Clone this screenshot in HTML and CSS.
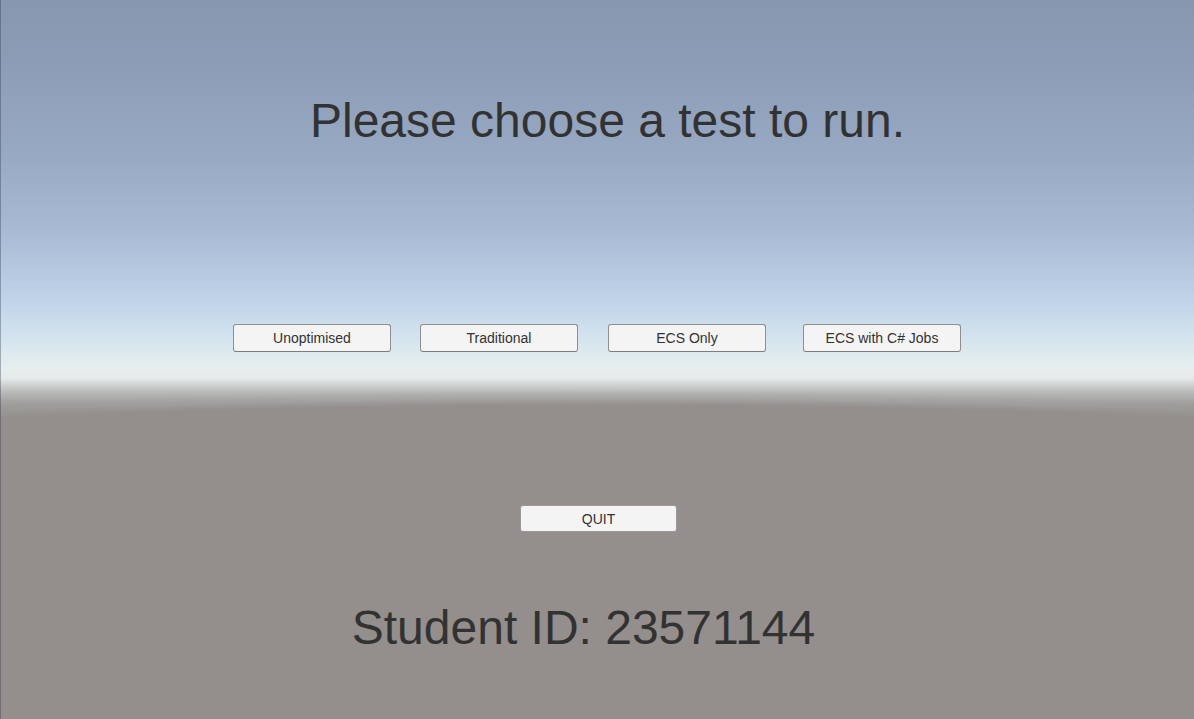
FILE: index.html
```html
<!DOCTYPE html>
<html lang="en">
<head>
<meta charset="utf-8">
<title>Test Menu</title>
<link rel="stylesheet" href="styles.css">
</head>
<body>
<main class="scene">
  <h1 class="title">Please choose a test to run.</h1>
  <div class="test-row">
    <button class="btn">Unoptimised</button>
    <button class="btn btn-traditional">Traditional</button>
    <button class="btn btn-ecs">ECS Only</button>
    <button class="btn btn-jobs">ECS with C# Jobs</button>
  </div>
  <div class="quit-row">
    <button class="btn btn-quit">QUIT</button>
  </div>
  <p class="student">Student ID: 23571144</p>
</main>
</body>
</html>
```
FILE: styles.css
```css
html, body {
  margin: 0;
  padding: 0;
  height: 100%;
  overflow: hidden;
}

body {
  font-family: "Liberation Sans", Arial, sans-serif;
  color: #323232;
}

.scene {
  position: relative;
  width: 1194px;
  height: 719px;
  box-sizing: border-box;
  border-left: 1px solid rgba(40, 50, 70, 0.35);
  display: flex;
  flex-direction: column;
  background:
    radial-gradient(3000px 600px at 50% 990px, #948f8c 0, #948f8c 97.4%, rgba(160, 160, 158, 0.55) 98.6%, rgba(200, 205, 205, 0) 100%),
    linear-gradient(to bottom,
      #8797b0 0px,
      #8c9cb6 60px,
      #97a8c3 150px,
      #a5b7d1 220px,
      #b5c8e0 270px,
      #c3d5ea 305px,
      #d2e2ee 335px,
      #dfebee 355px,
      #e8eeee 370px,
      #e6eaea 378px,
      #b9bab9 392px,
      #948f8c 410px,
      #948f8c 719px);
}

.title {
  margin: 97px 0 0 0;
  padding-left: 20px;
  font-size: 48px;
  line-height: 48px;
  font-weight: normal;
  text-align: center;
  color: #323232;
}

.test-row {
  display: flex;
  margin-top: 179px;
  padding-left: 232px;
}

.quit-row {
  display: flex;
  margin-top: 153px;
  padding-left: 519px;
}

.btn {
  box-sizing: border-box;
  width: 158px;
  height: 28px;
  margin: 0;
  padding: 0;
  background: #f4f4f4;
  border: 1px solid #8e8e8e;
  border-bottom-color: #7c7c7c;
  border-radius: 3px;
  font-family: "Liberation Sans", Arial, sans-serif;
  font-size: 14px;
  color: #323232;
  display: flex;
  align-items: center;
  justify-content: center;
}

.btn-traditional { margin-left: 29px; }
.btn-ecs { margin-left: 30px; }
.btn-jobs { margin-left: 37px; }

.btn-quit {
  width: 157px;
  height: 27px;
  border-color: #9c9896;
}

.student {
  margin: 72px 0 0 0;
  padding-right: 28px;
  font-size: 48px;
  line-height: 48px;
  text-align: center;
  color: #323232;
}
```
